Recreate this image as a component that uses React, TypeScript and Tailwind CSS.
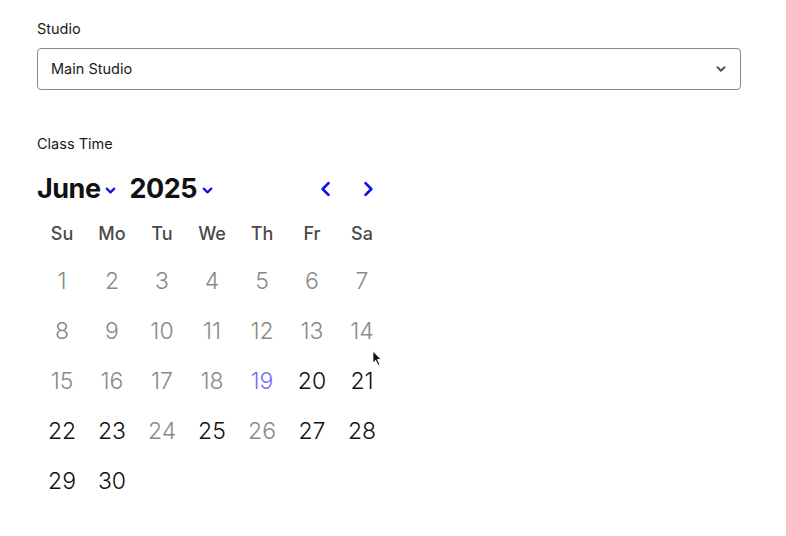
import React from "react";

const weekDays = ["Su", "Mo", "Tu", "We", "Th", "Fr", "Sa"];

// days that can still be booked
const available = [20, 21, 22, 23, 25, 27, 28, 29, 30];
const today = 19;

const Chevron: React.FC<{ className?: string }> = ({ className }) => (
  <svg viewBox="0 0 24 24" fill="none" stroke="currentColor" strokeWidth={3.5} strokeLinecap="round" strokeLinejoin="round" className={className}>
    <path d="M6 9l6 6 6-6" />
  </svg>
);

export default function App() {
  const days = Array.from({ length: 30 }, (_, i) => i + 1);

  const dayColor = (d: number) => {
    if (d === today) return "text-[#7d6ef5]";
    if (available.includes(d)) return "text-[#111]";
    return "text-[#8a8a8a]";
  };

  return (
    <div className="relative min-h-[536px] bg-white pl-[37px] pr-[45px] pt-[19px] font-['Inter',sans-serif] text-[#1a1a1a]">
      <label className="block text-[14.5px] leading-5">Studio</label>
      <div className="mt-[9px] flex h-[42px] items-center justify-between rounded-[4px] border border-[#8a8a8a] pl-[13px] pr-[12px]">
        <span className="text-[14.5px]">Main Studio</span>
        <Chevron className="h-[14px] w-[14px] text-[#555]" />
      </div>

      <label className="mt-[44px] block text-[14.5px] leading-5">Class Time</label>

      <div className="mt-[15px] flex w-[350px] items-center">
        <div className="flex items-center">
          <span className="text-[27px] font-bold tracking-[-0.5px] text-[#111]">June</span>
          <Chevron className="ml-[3px] mt-[2px] h-[15px] w-[15px] text-[#1010e8]" />
        </div>
        <div className="ml-[11px] flex items-center">
          <span className="text-[27px] font-bold tracking-[-0.5px] text-[#111]">2025</span>
          <Chevron className="ml-[3px] mt-[2px] h-[15px] w-[15px] text-[#1010e8]" />
        </div>
        <div className="ml-auto mr-[9px] flex items-center gap-[22px] text-[#1010e8]">
          <svg viewBox="0 0 24 24" fill="none" stroke="currentColor" strokeWidth={3.2} strokeLinecap="round" strokeLinejoin="round" className="h-[20px] w-[20px]">
            <path d="M15 5l-7 7 7 7" />
          </svg>
          <svg viewBox="0 0 24 24" fill="none" stroke="currentColor" strokeWidth={3.2} strokeLinecap="round" strokeLinejoin="round" className="h-[20px] w-[20px]">
            <path d="M9 5l7 7-7 7" />
          </svg>
        </div>
      </div>

      <div className="mt-[9px] grid w-[350px] grid-cols-7">
        {weekDays.map((w) => (
          <div key={w} className="flex h-[30px] items-center justify-center text-[18px] font-medium text-[#4a4a4a]">
            {w}
          </div>
        ))}
      </div>
      <div className="mt-[8px] grid w-[350px] grid-cols-7">
        {days.map((d) => (
          <div key={d} className={`flex h-[50px] items-center justify-center text-[23px] font-light ${dayColor(d)}`}>
            {d}
          </div>
        ))}
      </div>

      {/* mouse pointer */}
      <svg viewBox="0 0 12 18" className="absolute left-[372px] top-[350px] h-[17px] w-[11px]">
        <path d="M1 1 L1 14 L4 11 L6.5 16.5 L8.5 15.5 L6 10 L10 10 Z" fill="#111" stroke="#fff" strokeWidth={1} />
      </svg>
    </div>
  );
}
